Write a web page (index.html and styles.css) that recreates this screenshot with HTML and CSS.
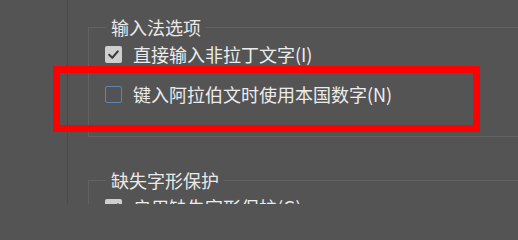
FILE: index.html
```html
<!DOCTYPE html>
<html lang="zh-CN">
<head>
<meta charset="utf-8">
<title>文字选项</title>
<link rel="stylesheet" href="styles.css">
</head>
<body>
<div class="layout">
  <div class="side"></div>
  <div class="main">
    <fieldset class="group group-first">
      <legend class="title">输入法选项</legend>
      <div class="rows">
        <label class="row">
          <span class="box checked"><svg viewBox="0 0 17 17" width="17" height="17"><path d="M4.2 8.8 L7.3 11.8 L12.8 5.4" fill="none" stroke="#3c3c3c" stroke-width="2.1" stroke-linecap="round" stroke-linejoin="round"/></svg></span>
          <span class="text">直接输入非拉丁文字(I)</span>
        </label>
        <label class="row">
          <span class="box empty"></span>
          <span class="text">键入阿拉伯文时使用本国数字(N)</span>
        </label>
      </div>
    </fieldset>
    <fieldset class="group group-second">
      <legend class="title">缺失字形保护</legend>
      <div class="rows">
        <label class="row">
          <span class="box checked"><svg viewBox="0 0 17 17" width="17" height="17"><path d="M4.2 8.8 L7.3 11.8 L12.8 5.4" fill="none" stroke="#3c3c3c" stroke-width="2.1" stroke-linecap="round" stroke-linejoin="round"/></svg></span>
          <span class="text">启用缺失字形保护(G)</span>
        </label>
      </div>
    </fieldset>
  </div>
</div>
<div class="highlight"></div>
</body>
</html>
```

FILE: styles.css
```css
html, body {
  margin: 0;
  padding: 0;
  width: 518px;
  height: 204px;
  overflow: hidden;
}
body {
  position: relative;
  background: #545454;
  color: #ececec;
  font-family: "Noto Sans CJK SC", "Noto Sans", sans-serif;
  font-size: 18px;
}
.layout {
  display: flex;
  height: 204px;
  overflow: hidden;
}
.side {
  width: 67px;
  flex: none;
  border-right: 1px solid #4a4a4a;
}
.main {
  flex: 1;
  min-width: 0;
  padding-left: 20px;
  overflow: hidden;
}
.group {
  width: 100%;
  min-width: 0;
  margin: 0;
  border: 1px solid #626262;
  border-right-width: 0;
  padding: 0 0 0 16px;
  box-sizing: border-box;
}
.group-first {
  margin-top: 15px;
  padding-bottom: 27px;
}
.group-second {
  margin-top: 31px;
}
.title {
  margin-left: 1px;
  padding: 0 5px;
  line-height: 24px;
  height: 24px;
  color: #e9e9e9;
}
.rows {
  display: flex;
  flex-direction: column;
  gap: 10px;
}
.row {
  display: flex;
  align-items: center;
  gap: 11px;
  height: 30px;
}
.box {
  width: 17px;
  height: 17px;
  box-sizing: border-box;
  border-radius: 2px;
  flex: none;
  display: block;
}
.box svg {
  display: block;
}
.checked {
  background: #cfcfcf;
}
.empty {
  border: 1.5px solid #5d86b6;
  background: #535353;
}
.text {
  line-height: 24px;
  white-space: nowrap;
}
.highlight {
  position: absolute;
  left: 53px;
  top: 66px;
  width: 427px;
  height: 66px;
  box-sizing: border-box;
  border: 7px solid #ff0000;
}
```
